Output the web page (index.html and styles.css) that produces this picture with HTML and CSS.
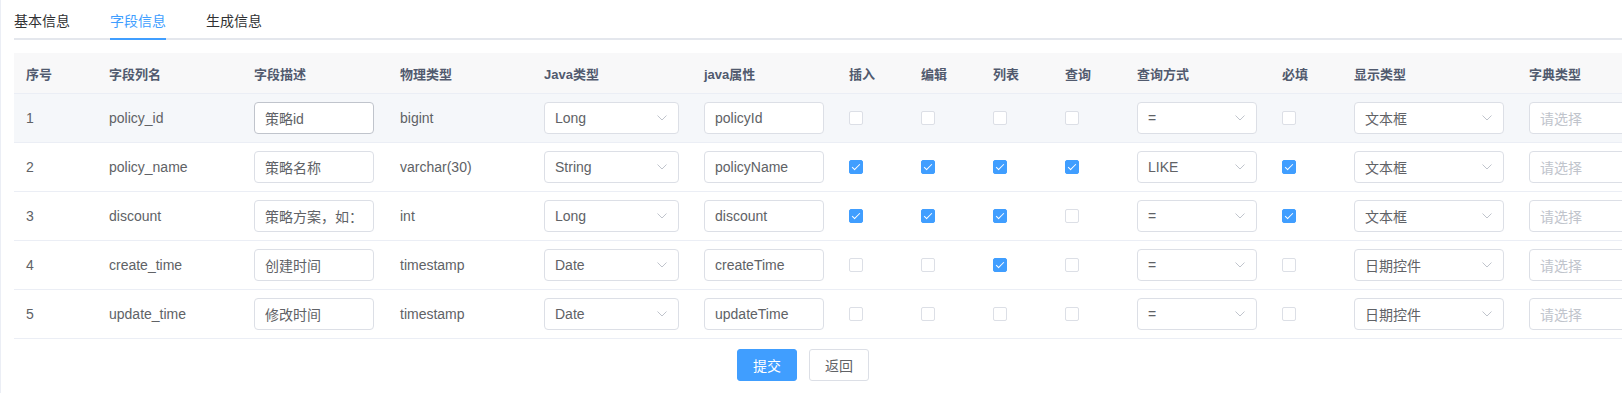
FILE: index.html
```html
<!DOCTYPE html>
<html lang="en">
  <head>
    <meta charset="UTF-8" />
    <meta name="viewport" content="width=device-width, initial-scale=1.0" />
    <title>修改生成配置</title>
    <link rel="stylesheet" href="styles.css">
  </head>
  <body>
    <div class="page">
      <!-- 标签页 -->
      <div class="tabs">
        <div class="tab">基本信息</div>
        <div class="tab active">字段信息</div>
        <div class="tab">生成信息</div>
      </div>

      <!-- 字段表格 -->
      <div class="table-wrap">
        <table class="grid">
          <colgroup>
            <col style="width:85px"><col style="width:145px"><col style="width:146px"><col style="width:144px">
            <col style="width:160px"><col style="width:145px"><col style="width:72px"><col style="width:72px">
            <col style="width:72px"><col style="width:72px"><col style="width:145px"><col style="width:72px">
            <col style="width:175px"><col style="width:175px">
          </colgroup>
          <thead>
            <tr>
              <th>序号</th><th>字段列名</th><th>字段描述</th><th>物理类型</th><th>Java类型</th><th>java属性</th>
              <th>插入</th><th>编辑</th><th>列表</th><th>查询</th><th>查询方式</th><th>必填</th><th>显示类型</th><th>字典类型</th>
            </tr>
          </thead>
          <tbody>
            <tr class="hover">
              <td><div class="cell">1</div></td>
              <td><div class="cell">policy_id</div></td>
              <td><div class="cell"><input class="input focus" value="策略id"></div></td>
              <td><div class="cell">bigint</div></td>
              <td><div class="cell"><div class="select w135"><span class="val">Long</span><svg class="arrow" width="10" height="6" viewBox="0 0 10 6"><polyline points="0.5,0.5 5,5 9.5,0.5" /></svg></div></div></td>
              <td><div class="cell"><input class="input" value="policyId"></div></td>
              <td><div class="cell"><span class="check"></span></div></td>
              <td><div class="cell"><span class="check"></span></div></td>
              <td><div class="cell"><span class="check"></span></div></td>
              <td><div class="cell"><span class="check"></span></div></td>
              <td><div class="cell"><div class="select"><span class="val">=</span><svg class="arrow" width="10" height="6" viewBox="0 0 10 6"><polyline points="0.5,0.5 5,5 9.5,0.5" /></svg></div></div></td>
              <td><div class="cell"><span class="check"></span></div></td>
              <td><div class="cell"><div class="select w150"><span class="val">文本框</span><svg class="arrow" width="10" height="6" viewBox="0 0 10 6"><polyline points="0.5,0.5 5,5 9.5,0.5" /></svg></div></div></td>
              <td><div class="cell"><div class="select w150"><span class="val placeholder">请选择</span><svg class="arrow" width="10" height="6" viewBox="0 0 10 6"><polyline points="0.5,0.5 5,5 9.5,0.5" /></svg></div></div></td>
            </tr>
            <tr>
              <td><div class="cell">2</div></td>
              <td><div class="cell">policy_name</div></td>
              <td><div class="cell"><input class="input" value="策略名称"></div></td>
              <td><div class="cell">varchar(30)</div></td>
              <td><div class="cell"><div class="select w135"><span class="val">String</span><svg class="arrow" width="10" height="6" viewBox="0 0 10 6"><polyline points="0.5,0.5 5,5 9.5,0.5" /></svg></div></div></td>
              <td><div class="cell"><input class="input" value="policyName"></div></td>
              <td><div class="cell"><span class="check on"></span></div></td>
              <td><div class="cell"><span class="check on"></span></div></td>
              <td><div class="cell"><span class="check on"></span></div></td>
              <td><div class="cell"><span class="check on"></span></div></td>
              <td><div class="cell"><div class="select"><span class="val">LIKE</span><svg class="arrow" width="10" height="6" viewBox="0 0 10 6"><polyline points="0.5,0.5 5,5 9.5,0.5" /></svg></div></div></td>
              <td><div class="cell"><span class="check on"></span></div></td>
              <td><div class="cell"><div class="select w150"><span class="val">文本框</span><svg class="arrow" width="10" height="6" viewBox="0 0 10 6"><polyline points="0.5,0.5 5,5 9.5,0.5" /></svg></div></div></td>
              <td><div class="cell"><div class="select w150"><span class="val placeholder">请选择</span><svg class="arrow" width="10" height="6" viewBox="0 0 10 6"><polyline points="0.5,0.5 5,5 9.5,0.5" /></svg></div></div></td>
            </tr>
            <tr>
              <td><div class="cell">3</div></td>
              <td><div class="cell">discount</div></td>
              <td><div class="cell"><input class="input" value="策略方案，如：满100减10"></div></td>
              <td><div class="cell">int</div></td>
              <td><div class="cell"><div class="select w135"><span class="val">Long</span><svg class="arrow" width="10" height="6" viewBox="0 0 10 6"><polyline points="0.5,0.5 5,5 9.5,0.5" /></svg></div></div></td>
              <td><div class="cell"><input class="input" value="discount"></div></td>
              <td><div class="cell"><span class="check on"></span></div></td>
              <td><div class="cell"><span class="check on"></span></div></td>
              <td><div class="cell"><span class="check on"></span></div></td>
              <td><div class="cell"><span class="check"></span></div></td>
              <td><div class="cell"><div class="select"><span class="val">=</span><svg class="arrow" width="10" height="6" viewBox="0 0 10 6"><polyline points="0.5,0.5 5,5 9.5,0.5" /></svg></div></div></td>
              <td><div class="cell"><span class="check on"></span></div></td>
              <td><div class="cell"><div class="select w150"><span class="val">文本框</span><svg class="arrow" width="10" height="6" viewBox="0 0 10 6"><polyline points="0.5,0.5 5,5 9.5,0.5" /></svg></div></div></td>
              <td><div class="cell"><div class="select w150"><span class="val placeholder">请选择</span><svg class="arrow" width="10" height="6" viewBox="0 0 10 6"><polyline points="0.5,0.5 5,5 9.5,0.5" /></svg></div></div></td>
            </tr>
            <tr>
              <td><div class="cell">4</div></td>
              <td><div class="cell">create_time</div></td>
              <td><div class="cell"><input class="input" value="创建时间"></div></td>
              <td><div class="cell">timestamp</div></td>
              <td><div class="cell"><div class="select w135"><span class="val">Date</span><svg class="arrow" width="10" height="6" viewBox="0 0 10 6"><polyline points="0.5,0.5 5,5 9.5,0.5" /></svg></div></div></td>
              <td><div class="cell"><input class="input" value="createTime"></div></td>
              <td><div class="cell"><span class="check"></span></div></td>
              <td><div class="cell"><span class="check"></span></div></td>
              <td><div class="cell"><span class="check on"></span></div></td>
              <td><div class="cell"><span class="check"></span></div></td>
              <td><div class="cell"><div class="select"><span class="val">=</span><svg class="arrow" width="10" height="6" viewBox="0 0 10 6"><polyline points="0.5,0.5 5,5 9.5,0.5" /></svg></div></div></td>
              <td><div class="cell"><span class="check"></span></div></td>
              <td><div class="cell"><div class="select w150"><span class="val">日期控件</span><svg class="arrow" width="10" height="6" viewBox="0 0 10 6"><polyline points="0.5,0.5 5,5 9.5,0.5" /></svg></div></div></td>
              <td><div class="cell"><div class="select w150"><span class="val placeholder">请选择</span><svg class="arrow" width="10" height="6" viewBox="0 0 10 6"><polyline points="0.5,0.5 5,5 9.5,0.5" /></svg></div></div></td>
            </tr>
            <tr>
              <td><div class="cell">5</div></td>
              <td><div class="cell">update_time</div></td>
              <td><div class="cell"><input class="input" value="修改时间"></div></td>
              <td><div class="cell">timestamp</div></td>
              <td><div class="cell"><div class="select w135"><span class="val">Date</span><svg class="arrow" width="10" height="6" viewBox="0 0 10 6"><polyline points="0.5,0.5 5,5 9.5,0.5" /></svg></div></div></td>
              <td><div class="cell"><input class="input" value="updateTime"></div></td>
              <td><div class="cell"><span class="check"></span></div></td>
              <td><div class="cell"><span class="check"></span></div></td>
              <td><div class="cell"><span class="check"></span></div></td>
              <td><div class="cell"><span class="check"></span></div></td>
              <td><div class="cell"><div class="select"><span class="val">=</span><svg class="arrow" width="10" height="6" viewBox="0 0 10 6"><polyline points="0.5,0.5 5,5 9.5,0.5" /></svg></div></div></td>
              <td><div class="cell"><span class="check"></span></div></td>
              <td><div class="cell"><div class="select w150"><span class="val">日期控件</span><svg class="arrow" width="10" height="6" viewBox="0 0 10 6"><polyline points="0.5,0.5 5,5 9.5,0.5" /></svg></div></div></td>
              <td><div class="cell"><div class="select w150"><span class="val placeholder">请选择</span><svg class="arrow" width="10" height="6" viewBox="0 0 10 6"><polyline points="0.5,0.5 5,5 9.5,0.5" /></svg></div></div></td>
            </tr>
          </tbody>
        </table>
      </div>

      <!-- 底部按钮 -->
      <div class="footer">
        <button class="btn primary">提交</button>
        <button class="btn">返回</button>
      </div>
    </div>
  </body>
</html>
```

FILE: styles.css
```css
/* 页面基础 */
body {
  margin: 0;
  font-family: "Liberation Sans", "Noto Sans CJK SC", sans-serif;
  font-size: 14px;
  color: #606266;
  background: #fff;
  overflow: hidden;
}

.page {
  border-left: 1px solid #ebeef5;
  height: 393px;
  box-sizing: border-box;
  padding-left: 13px;
}

/* 标签页 */
.tabs {
  display: flex;
  height: 40px;
  border-bottom: 2px solid #e4e7ed;
  box-sizing: border-box;
  margin-bottom: 13px;
}

.tab {
  height: 40px;
  line-height: 42px;
  padding: 0 20px;
  color: #303133;
  box-sizing: border-box;
}

.tab:first-child {
  padding-left: 0;
}

.tab.active {
  color: #409eff;
  background: linear-gradient(#409eff, #409eff) no-repeat;
  background-size: calc(100% - 40px) 2px;
  background-position: 20px 38px;
}

/* 表格 */
.table-wrap {
  overflow: hidden;
}

.grid {
  border-collapse: collapse;
  table-layout: fixed;
  width: 1680px;
}

.grid th {
  background: #f8f8f9;
  color: #515a6e;
  font-size: 13px;
  font-weight: bold;
  text-align: left;
  height: 40px;
  padding: 0 0 0 10px;
  border-bottom: 1px solid #ebeef5;
}

.grid td {
  padding: 8px 0 8px 10px;
  border-bottom: 1px solid #ebeef5;
}

.grid th:first-child,
.grid td:first-child {
  padding-left: 12px;
}

.grid tr.hover td {
  background: #f5f7fa;
}

.cell {
  height: 32px;
  display: flex;
  align-items: center;
  white-space: nowrap;
}

/* 输入框 */
.input {
  width: 120px;
  height: 32px;
  box-sizing: border-box;
  border: 1px solid #dcdfe6;
  border-radius: 4px;
  padding: 0 10px;
  font-family: inherit;
  font-size: 14px;
  color: #606266;
  background: #fff;
  outline: none;
}

.input.focus {
  border-color: #c0c4cc;
}

/* 下拉框 */
.select {
  width: 120px;
  height: 32px;
  box-sizing: border-box;
  border: 1px solid #dcdfe6;
  border-radius: 4px;
  padding: 0 11px 0 10px;
  display: flex;
  align-items: center;
  background: #fff;
}

.select.w135 {
  width: 135px;
}

.select.w150 {
  width: 150px;
}

.select .val {
  flex: 1;
  overflow: hidden;
}

.select .placeholder {
  color: #c0c4cc;
}

.arrow polyline {
  fill: none;
  stroke: #c0c4cc;
  stroke-width: 1;
}

/* 复选框 */
.check {
  width: 14px;
  height: 14px;
  box-sizing: border-box;
  border: 1px solid #dcdfe6;
  border-radius: 2px;
  background: #fff;
  position: relative;
}

.check.on {
  background: #409eff;
  border-color: #409eff;
}

.check.on::after {
  content: "";
  position: absolute;
  left: 4px;
  top: 1px;
  width: 3px;
  height: 7px;
  border: 1px solid #fff;
  border-left: 0;
  border-top: 0;
  transform: rotate(45deg);
}

/* 底部按钮 */
.footer {
  display: flex;
  justify-content: center;
  gap: 12px;
  margin-top: 10px;
  padding-right: 16px;
  margin-left: -14px;
}

.btn {
  width: 60px;
  height: 32px;
  border: 1px solid #dcdfe6;
  border-radius: 3px;
  background: #fff;
  color: #606266;
  font-family: inherit;
  font-size: 14px;
  padding: 0;
}

.btn.primary {
  background: #409eff;
  border-color: #409eff;
  color: #fff;
}
```
